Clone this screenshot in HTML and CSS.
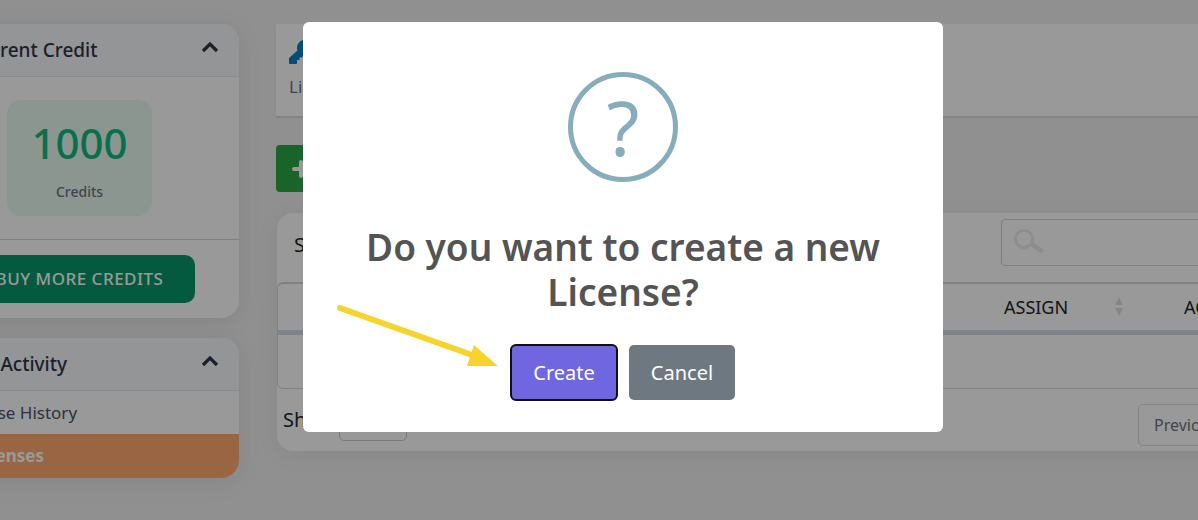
FILE: index.html
```html
<!DOCTYPE html>
<html lang="en">
<head>
<meta charset="utf-8">
<title>Licenses</title>
<link rel="stylesheet" href="styles.css">
</head>
<body>
<div class="page">
  <aside class="sidebar">
    <section class="card">
      <header class="card-head">
        <h2>Current Credit</h2>
        <svg class="chevron" viewBox="0 0 18 12"><path d="M2 10 9 3l7 7"/></svg>
      </header>
      <div class="credit-body">
        <div class="credit-box">
          <strong>1000</strong>
          <span>Credits</span>
        </div>
      </div>
      <footer class="credit-foot">
        <button class="buy" type="button">BUY MORE CREDITS</button>
      </footer>
    </section>
    <section class="card">
      <header class="card-head">
        <h2>My Activity</h2>
        <svg class="chevron" viewBox="0 0 18 12"><path d="M2 10 9 3l7 7"/></svg>
      </header>
      <nav class="links">
        <a href="#history">Purchase History</a>
        <a class="active" href="#licenses">My Licenses</a>
      </nav>
    </section>
  </aside>

  <main class="main">
    <div class="crumb">
      <svg class="key" viewBox="0 0 24 24"><path d="M24 8a8 8 0 0 1-9.600 7.850L12.800 17.500H10.500V20H8v3.200c0 .5-.3.800-.8.800H.8c-.5 0-.8-.3-.8-.8V18.500c0-.3.100-.5.300-.7L8.500 10.500A8 8 0 1 1 24 8z"/></svg>
      <span>Licenses</span>
    </div>
    <button class="add" type="button" aria-label="Create license">
      <svg viewBox="0 0 18 18"><path d="M9 2v14M2 9h14"/></svg>
    </button>
    <section class="panel">
      <div class="tools">
        <span>Search</span>
        <div class="search">
          <svg viewBox="0 0 32 26"><circle cx="11" cy="11" r="8.500"/><path d="m20 17 8 5.500"/></svg>
          <input type="search" aria-label="Search licenses">
        </div>
      </div>
      <div class="table-frame">
        <table>
          <thead>
            <tr>
              <th></th>
              <th class="assign"><div>ASSIGN <svg class="sort" viewBox="0 0 8 20"><path d="M4 0l4 8.500H0zM0 11.500h8L4 20z"/></svg></div></th>
              <th class="action">ACTION</th>
            </tr>
          </thead>
          <tbody><tr><td></td><td></td><td></td></tr></tbody>
        </table>
      </div>
      <div class="pager">
        <label for="count">Show</label>
        <select id="count"><option></option></select>
        <button type="button">Previous</button>
      </div>
    </section>
  </main>
</div>

<div class="overlay">
  <div class="dialog" role="dialog" aria-modal="true" aria-labelledby="dialog-title">
    <div class="question">?</div>
    <h1 id="dialog-title">Do you want to create a new License?</h1>
    <div class="actions">
      <button class="create" type="button">Create</button>
      <button class="cancel" type="button">Cancel</button>
    </div>
    <svg class="arrow" viewBox="0 0 164 66"><path class="shaft" d="M5 5 140 53"/><path class="tip" d="m139 42 24 21h-31z"/></svg>
  </div>
</div>
</body>
</html>
```
FILE: styles.css
```css
* { box-sizing: border-box; }
body {
  margin: 0;
  min-height: 100vh;
  overflow: hidden;
  background: #f0f0f0;
  color: #212529;
  font-family: "Noto Sans", "Open Sans", sans-serif;
}
h1, h2 { margin: 0; }
button, input, select { font: inherit; }

.page {
  display: flex;
  gap: 37px;
  margin: 0 -142px 0 -80px;
  padding-top: 24px;
}
.sidebar {
  flex: 0 0 319px;
  display: flex;
  flex-direction: column;
  gap: 20px;
}
.card {
  overflow: hidden;
  border-radius: 18px;
  background: #fff;
  box-shadow: 0 4px 24px rgba(0, 0, 0, .08);
}
.card-head {
  display: flex;
  align-items: center;
  justify-content: space-between;
  height: 53px;
  padding: 0 20px 4px 48px;
  border-bottom: 1px solid #e2e8f0;
  background: #f7f9fc;
  color: #2d3748;
}
.card-head h2 { font-size: 19px; font-weight: 500; line-height: 24px; padding-top: 3px; }
.chevron { width: 18px; height: 12px; margin-bottom: 2px; fill: none; stroke: #2d3748; stroke-width: 3.200; }
.credit-body { display: flex; justify-content: center; padding: 23px 0; }
.credit-box {
  display: flex;
  flex-direction: column;
  align-items: center;
  width: 145px;
  padding: 16px 0 14px;
  border-radius: 14px;
  background: #eafbf2;
}
.credit-box strong { color: #10b981; font-size: 42px; font-weight: 500; line-height: 54px; }
.credit-box span { padding-top: 11px; color: #6b7280; font-size: 14px; font-weight: 500; line-height: 21px; }
.credit-foot {
  display: flex;
  justify-content: center;
  padding: 15px 0;
  border-top: 1px solid #d5d5d5;
}
.buy {
  height: 48px;
  padding: 0 32px 2px;
  border: 0;
  border-radius: 10px;
  background: #059669;
  color: #fff;
  font-size: 17px;
  font-weight: 500;
  letter-spacing: 0.5px;
}
.links a {
  display: block;
  padding: 9px 22px;
  color: #4a5568;
  font-size: 17px;
  line-height: 25px;
  text-decoration: none;
}
.links .active { padding-bottom: 10px; background: #ffa970; color: #fff; font-weight: 700; }

.main { flex: 1; min-width: 0; }
.crumb {
  display: flex;
  flex-direction: column;
  gap: 10px;
  height: 92px;
  padding: 16px 13px;
  background: #fff;
  color: #6b7280;
  font-size: 17px;
  line-height: 26px;
  box-shadow: 0 2px 1px rgba(0, 0, 0, .08);
}
.key { width: 24px; height: 24px; fill: #0284c7; }
.add {
  display: flex;
  align-items: center;
  width: 160px;
  height: 47px;
  margin: 29px 0 21px;
  padding: 0 16px;
  border: 0;
  border-radius: 4px;
  background: #28a745;
}
.add svg { width: 18px; height: 18px; fill: none; stroke: #fff; stroke-width: 4; stroke-linecap: round; }
.panel {
  margin-left: 1px;
  border-radius: 16px;
  background: #fff;
  box-shadow: 0 4px 24px rgba(0, 0, 0, .06);
}
.tools {
  display: flex;
  align-items: center;
  justify-content: space-between;
  padding: 6px 16px 16px;
  font-size: 20px;
}
.tools span { padding: 4px 0 0 1px; }
.search {
  display: flex;
  align-items: center;
  width: 323px;
  height: 47px;
  padding: 0 11px;
  border: 1px solid #d0d0d0;
  border-radius: 4px;
}
.search svg { width: 32px; height: 26px; margin-bottom: 4px; fill: none; stroke: #eaedeb; stroke-width: 3; }
.search path { stroke-width: 5; stroke-linecap: round; }
.search input { flex: 1; min-width: 0; border: 0; background: none; }
.table-frame { border: 1px solid #d8d8d8; border-top-width: 2px; border-radius: 6px; }
table { width: 100%; table-layout: fixed; border-collapse: separate; border-spacing: 0; }
th {
  height: 51px;
  padding: 0 18px 1px;
  border-bottom: 5px solid #d3dae4;
  font-size: 18px;
  font-weight: 400;
  text-align: left;
}
th div { display: flex; align-items: center; justify-content: space-between; }
.assign { width: 180px; }
.assign div { padding-right: 25px; }
.action { width: 173px; }
.sort { width: 8px; height: 19px; fill: #dedede; }
td { height: 53px; padding: 0; }
.pager {
  display: flex;
  align-items: flex-start;
  gap: 4px;
  padding: 9px 16px 5px 6px;
  font-size: 20px;
}
.pager label { width: 52px; line-height: 43px; }
.pager select { width: 68px; height: 43px; border: 1px solid #c5cad0; border-radius: 5px; background: #fff; }
.pager button {
  width: 186px;
  height: 42px;
  margin: 6px 0 0 auto;
  padding: 0 15px;
  border: 1px solid #d8dbde;
  border-radius: 5px;
  background: #fff;
  color: #6c757d;
  font-size: 16px;
  text-align: left;
}

.overlay {
  position: fixed;
  inset: 0;
  display: flex;
  align-items: flex-start;
  justify-content: center;
  padding: 22px 0 0 48px;
  background: rgba(0, 0, 0, .4);
}
.dialog {
  position: relative;
  display: flex;
  flex-direction: column;
  align-items: center;
  width: 640px;
  padding: 50px 20px 32px;
  border-radius: 6px;
  background: #fff;
}
.question {
  width: 110px;
  height: 110px;
  border: 5px solid #87adbd;
  border-radius: 50%;
  color: #87adbd;
  font-size: 75px;
  line-height: 100px;
  text-align: center;
}
.dialog h1 {
  margin: 42px 0 31px;
  padding: 0 20px;
  color: #545454;
  font-size: 37px;
  font-weight: 600;
  line-height: 45px;
  text-align: center;
}
.actions { display: flex; gap: 12px; }
.actions button {
  width: 106px;
  height: 55px;
  padding: 0;
  border: 0;
  border-radius: 5px;
  color: #fff;
  font-size: 20px;
}
.actions .create { background: #7066e0; outline: 2px solid #101010; outline-offset: -1px; }
.actions .cancel { background: #6e7881; }
.arrow { position: absolute; left: 32px; top: 281px; width: 164px; height: 66px; }
.shaft { fill: none; stroke: #f7d32e; stroke-width: 6; stroke-linecap: round; }
.tip { fill: #f7d32e; }
```
